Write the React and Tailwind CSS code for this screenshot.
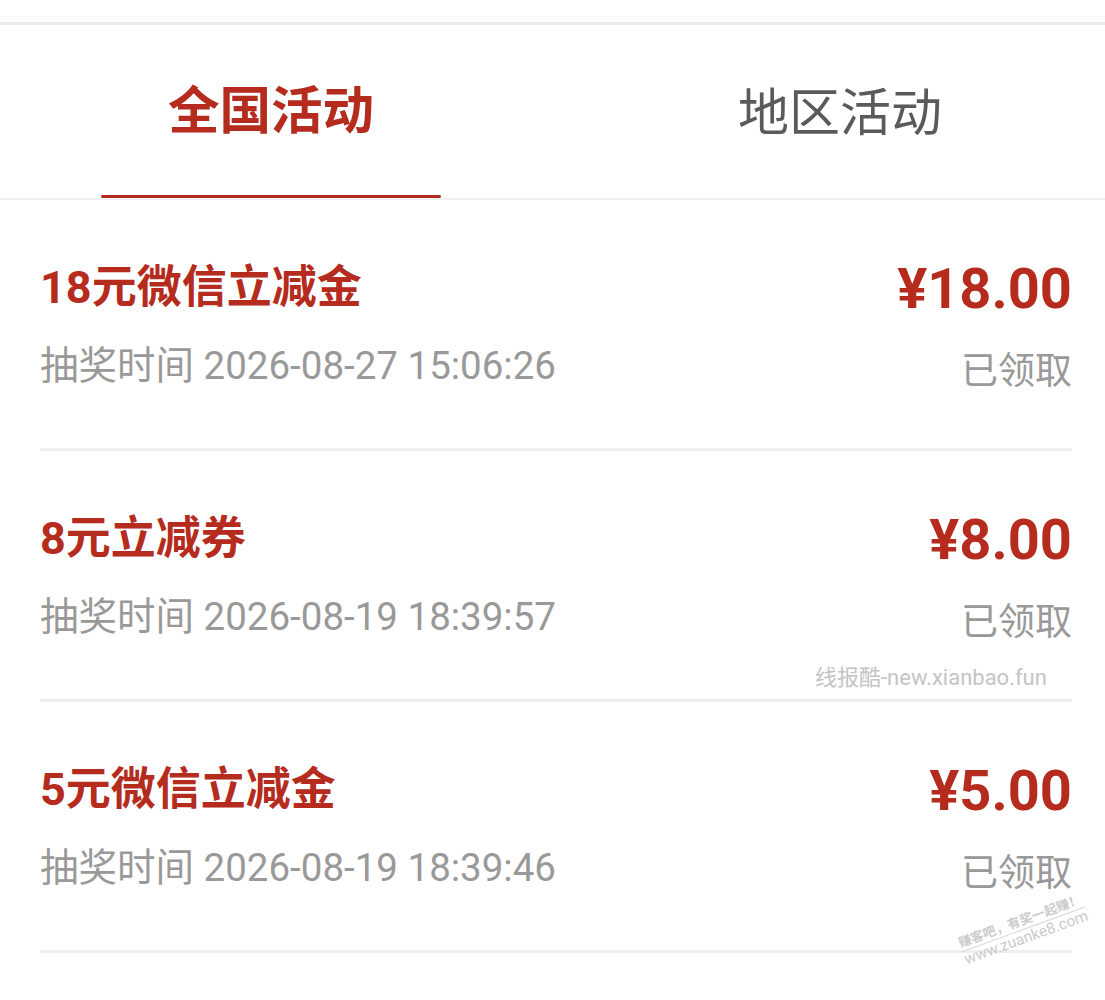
const records = [
  { id: 1, title: '18元微信立减金', time: '2026-08-27 15:06:26', amount: '¥18.00' },
  { id: 2, title: '8元立减券', time: '2026-08-19 18:39:57', amount: '¥8.00' },
  { id: 3, title: '5元微信立减金', time: '2026-08-19 18:39:46', amount: '¥5.00' },
];

const RecordRow = ({ item }) => (
  <div className="mr-[33px] ml-10 border-b-[3px] border-[#efefef]">
    <div className="flex h-[248px] justify-between">
      <div>
        <p className="mt-[58px] h-[60px] text-[45px] leading-[60px] font-bold text-[#b52c1e]">{item.title}</p>
        <p className="mt-[23px] h-[50px] text-[38.5px] leading-[50px] text-[#999999]">
          抽奖时间 {item.time}
        </p>
      </div>
      <div className="flex flex-col items-end">
        <p className="mt-[59px] h-[60px] text-[56px] leading-[60px] font-bold text-[#b52c1e]">{item.amount}</p>
        <p className="mt-[28px] h-[50px] text-[37px] leading-[50px] text-[#999999]">已领取</p>
      </div>
    </div>
  </div>
);

const App = () => {
  return (
    <div className="relative h-[1000px] w-[1105px] overflow-hidden bg-white font-['Roboto','Noto_Sans_CJK_SC',sans-serif]">
      <div className="h-4 bg-white" />
      <div className="h-px bg-[#f7f7f7]" />
      <div className="h-[5px] bg-white" />
      <div className="h-[3px] bg-[#ebebeb]" />

      <div className="flex h-[175px] border-b-2 border-[#f0f0f0]">
        <div className="ml-[101px] flex w-[340px] flex-col">
          <div className="flex flex-1 items-center justify-center pt-1">
            <span className="text-[51.5px] leading-none font-bold text-[#b52c1e]">全国活动</span>
          </div>
          <div className="h-[3px] rounded-full bg-[#b52c1e]" />
        </div>
        <div className="ml-[229px] flex w-[340px] flex-col">
          <div className="flex flex-1 items-center justify-center pt-1">
            <span className="text-[51px] leading-none text-[#5a5a5a]">地区活动</span>
          </div>
        </div>
      </div>

      {records.map((item) => (
        <RecordRow key={item.id} item={item} />
      ))}

      <span className="absolute top-[667px] left-[815px] text-[22px] leading-none text-[#c4c4c4]">
        线报酷-new.xianbao.fun
      </span>

      <div className="absolute top-[912px] left-[958px] -rotate-[20deg] text-[#cbcbcb]">
        <p className="border-b border-[#d8d8d8] text-[13px] leading-[17px] font-bold">赚客吧，有奖一起赚！</p>
        <p className="text-[15.5px] leading-[17px]">www.zuanke8.com</p>
      </div>
    </div>
  );
};

export default App;
